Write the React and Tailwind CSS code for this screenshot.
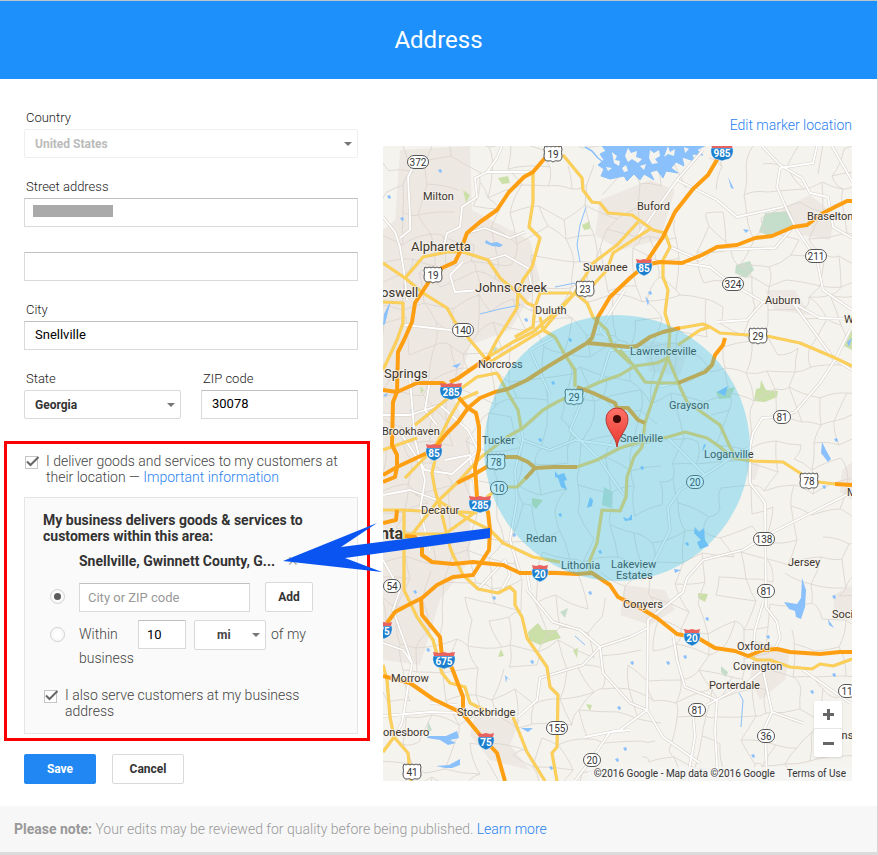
import React, { useState } from "react"

const motorways = [
	"M560 146L545 158L533 172L524 177L509 192L497 210L480 222L467 233L460 252L455 262L442 268L430 280L415 303L412 322L404 340L398 352L397 392L393 402L392 445L397 455L397 467L395 477L383 482",
	"M383 390L397 392L417 383L443 383L452 390L468 408L476 413L479 427L479 450L475 467L477 497L480 503L488 512L490 530L489 550L473 575L453 577L437 585L422 598L408 605L395 612L387 623",
	"M450 382L457 379L480 363L490 357",
	"M383 475L397 467L427 453L433 450L447 433L458 422L468 408L480 398L495 392L508 389L527 380L547 367L587 343L592 338L598 317L610 297L630 278L643 267L663 237L675 212L693 189L708 175L718 158L722 146",
	"M645 265L660 262L682 263L702 255L717 247L737 245L755 238L772 236L793 227L807 225L823 213L847 201L852 201",
	"M588 343L630 347L637 346L650 337L663 332L680 328",
	"M725 338L723 345L715 355L712 365L705 372L678 383",
	"M457 483L473 475L490 465L503 457L517 457L528 462L535 468L553 467L577 467M535 468L525 479",
	"M577 387L593 393L615 403L617 408L628 408L638 420L645 423",
	"M835 484L852 485",
	"M383 523L396 520L397 510M405 536L415 537L422 547L422 555L432 562L453 564L473 562L503 565L520 573L557 573L577 574L592 573L610 585L618 597L642 609L657 618L677 634L698 638L715 648L735 651L748 656L763 650L777 649L790 652L820 654L840 652L852 652",
	"M421 598L422 615L440 637L442 657L452 668L463 697L463 713",
	"M383 676L410 683L433 699L462 713L480 735L497 753L505 781",
]

const highways = [
	"M680 328L703 324L710 327L720 333L748 335L767 336L800 343L833 357L852 366",
	"M678 345L700 330L710 327",
	"M678 383L660 383L645 382L633 365L620 350",
	"M668 358L657 387L645 423L642 447L634 457L627 477L626 497L620 511L602 510L597 543L590 560L590 574",
	"M668 358L680 387L687 402L720 425L730 447L735 455",
	"M668 358L657 363L635 366L620 375L600 382L587 388L557 402L543 410L523 428L507 437L480 458L457 483L437 502L404 545",
	"M577 467L597 460L620 448L640 442L668 437L685 432L707 438L720 447L733 458L753 461L783 462L800 473L810 481L835 484",
	"M525 479L517 487L500 487L487 497",
	"M555 337L565 355L575 370L575 387",
	"M488 357L513 342L533 332L560 308L575 293L593 263L617 245L638 222",
	"M490 362L543 330L553 318L575 293L593 285L607 270L613 253L630 242L650 229",
	"M563 155L582 178L583 190L592 202L600 203L608 213L632 215L653 230L665 233L670 247L663 260L663 277L668 290L665 313L670 330L668 358",
	"M533 173L533 202L529 227L540 238L532 267L523 280L518 293L517 308L497 340L488 357",
	"M383 263L405 278L423 293L447 308L455 322L470 340L485 358",
	"M405 278L412 270L423 257L447 252L463 252L488 260L500 278L518 293L527 303L538 308",
	"M383 302L403 303L403 323L397 340L383 370",
	"M572 293L540 293L535 307L533 327L515 337",
	"M575 293L587 303L593 317L607 330L613 347L630 363",
	"M540 317L543 330L555 337",
	"M383 510L403 510L437 512L463 512L477 513M435 460L432 473L435 490L440 507L450 547L453 555L463 575L478 589L498 593L510 587L515 592L515 605L522 617L527 638L547 667L550 687L558 695L557 747L552 753L557 781",
	"M437 500L470 520L490 530L503 543L533 557L560 562",
	"M404 510L404 590L417 617L433 640L442 673L450 683L465 687L470 703L490 713",
	"M404 534L445 534L470 516L478 510",
	"M383 665L387 680L390 717L394 737L408 753L411 781M394 737L383 752",
	"M513 717L527 752L545 781",
	"M497 373L508 393L518 410L521 428",
	"M497 373L477 377L452 395L415 425",
	"M478 392L460 400L450 417L435 447L405 478",
	"M383 450L417 438",
	"M748 656L757 660L770 660L790 667L812 669L820 664L833 666L852 659",
]

const streets = [
	"M413 167L408 177L410 217L410 230L400 238M383 217L395 232L400 247L405 278L407 300",
	"M502 146L497 158L487 172L475 178L477 197L462 207L460 227L447 233L443 250M487 172L533 172",
	"M467 233L485 228L510 238L525 232M463 262L450 275L455 292L480 290M488 260L505 255L528 268L532 290",
	"M703 150L677 180L637 237",
	"M762 146L780 165L802 178L810 193L828 197L833 227L852 238",
	"M817 146L813 163L780 168L777 187L787 210L797 230L817 260L823 290L833 297L852 310",
	"M832 146L852 181M677 180L717 200L737 217L783 207",
	"M682 263L710 267L730 283L763 302L793 303L820 318L852 319",
	"M763 302L747 320L717 322M793 303L820 340L833 358L852 370",
	"M670 247L700 260L712 250L775 248L793 227",
	"M850 330L835 360L820 383L795 412L777 417L762 418L753 433L750 447L750 483L765 503L766 607L777 622L780 638L775 649",
	"M852 492L813 512L773 532L743 550L703 560L687 578L683 592L667 605L648 620L647 710L620 730L585 737",
	"M673 635L677 660L685 687L717 700L715 730L718 781M647 710L663 737L700 763",
	"M687 781L695 737L693 715M707 705L747 683L763 670L772 712L765 727L767 781M772 712L803 723M803 670L850 703",
	"M763 603L755 630L753 653M527 590L553 622L580 630L600 647L630 637L648 628",
	"M600 647L603 673L630 703L647 710M600 647L583 665L540 678L537 700L518 717",
	"M630 730L610 732L593 757L575 781M383 560L400 590L393 610L412 663L402 723L394 737",
	"M478 589L505 560L510 575L500 593M527 573L530 590M405 325L450 330L470 340",
	"M383 415L410 415L440 405L468 430L478 450M410 380L415 440L425 480L420 510L430 550",
	"M383 495L410 490L437 500M430 380L425 410L437 425M445 460L470 455L475 490M383 428L400 432L425 470L452 474L479 450",
	"M521 428L523 440L515 470L517 500L510 540L520 573M523 440L550 450L575 440L617 446",
	"M550 395L530 350L555 337M600 382L610 350L655 350M587 388L570 430L600 460L620 490L626 497",
	"M750 447L735 455L705 475L680 490L668 508L670 530L655 560L640 580M667 437L690 460L705 475",
	"M657 387L690 380L712 365M620 350L600 330L615 305L625 290",
	"M383 643L403 650L412 663M430 703L457 705M383 716L430 712L462 713",
]

const parks = [
	"M765 213L790 211L795 226L770 236L759 232Z",
	"M498 178L508 176L510 183L502 184Z",
	"M582 225L590 221L590 229L584 230Z",
	"M736 265L750 261L754 270L746 278L735 273Z",
	"M761 380L766 390L778 391L777 397L765 402L754 401L756 389L760 388Z",
	"M716 392L735 387L730 398L719 399Z",
	"M604 487L613 492L611 508L602 505Z",
	"M532 498L543 500L536 509L532 505Z",
	"M528 632L538 623L543 630L556 630L561 638L550 641L540 645L529 640Z",
	"M560 612L568 608L565 618Z",
	"M501 649L504 656L498 657Z",
	"M573 650L578 648L577 658Z",
	"M428 721L432 730L427 733Z",
	"M586 704L592 705L590 711Z",
	"M698 593L708 594L705 602L698 598Z",
	"M721 666L728 672L726 677L721 672Z",
	"M844 346L852 330L852 350Z",
	"M463 190L470 195L466 203Z",
	"M492 345L498 348L494 354Z",
	"M420 386L424 390L421 394Z",
]

const lakes = [
	"M486 240L491 243L497 242L503 245L500 247L492 246L485 243Z",
	"M728 177L734 189L731 188Z",
	"M452 366L461 363L457 368Z",
	"M555 471L558 475L564 473L567 480L564 481L567 490L561 487L558 478L555 477Z",
	"M590 497L593 500L592 506L587 508L588 504Z",
	"M695 527L699 532L704 528L705 540L709 546L700 549L697 542L701 540L694 533Z",
	"M717 392L728 386L725 396Z",
	"M822 442L827 452L831 459L828 462L821 453Z",
	"M802 578L806 590L805 607L801 619L796 617L795 611L789 609L784 602L797 604L801 598Z",
	"M623 517L628 519L632 514L632 520L625 521Z",
	"M428 736L446 736L457 731L459 738L450 740L456 743L448 745L440 740L427 738Z",
	"M436 766L449 765L460 759L460 765L452 768L445 768Z",
	"M521 728L533 728L528 732Z",
	"M828 619L834 628L829 625Z",
	"M384 314L391 300L385 324L383 325Z",
	"M674 569L681 570L675 573Z",
	"M706 445L702 452L704 444Z",
	"M505 675L510 680L507 678L506 683Z",
	"M743 229L749 230L746 233Z",
	"M847 342L852 338L849 347Z",
	"M383 395L388 393L386 397Z",
	"M645 296L649 301L648 306Z",
]

const ponds = [
	[440, 171], [402, 219], [389, 197], [526, 320], [553, 383], [412, 411], [650, 293], [415, 592], [428, 650],
	[532, 662], [494, 598], [590, 593], [619, 708], [551, 768], [617, 760], [632, 663], [668, 663], [685, 657],
	[625, 749], [753, 756], [812, 692], [834, 675], [707, 619], [836, 440], [681, 390], [824, 487], [642, 468],
	[834, 597], [768, 637], [687, 544], [514, 535], [560, 515], [600, 552], [570, 340], [540, 440],
]

const builtUp = [
	"M400 150L470 146L472 210L530 240L540 280L510 330L470 345L455 400L470 440L470 560L440 600L420 665L383 660L383 230L395 220Z",
	"M600 200L650 180L675 190L660 240L620 250L595 235Z",
	"M475 715L520 720L510 745L530 770L490 760L470 735Z",
	"M625 585L665 590L675 610L650 625L620 615Z",
	"M755 640L790 650L785 680L760 700L750 680Z",
	"M780 210L810 195L835 215L830 240L800 235Z",
	"M745 455L760 465L755 480L748 478Z",
	"M765 290L795 290L810 315L775 310Z",
	"M842 470L852 462L852 500L840 492Z",
	"M640 340L690 345L680 375L650 372Z",
	"M833 595L852 585L852 620L835 618Z",
]

// tangle of unnamed back roads under the named ones
function buildBackRoads() {
	let seed = 11
	const random = () => {
		seed = (seed * 16807) % 2147483647
		return seed / 2147483647
	}
	const size = 23
	const rows = []
	for (let r = 0; r < 31; r++) {
		const row = []
		for (let c = 0; c < 23; c++) {
			row.push([
				Math.round(370 + c * size + random() * 20),
				Math.round(133 + r * size + random() * 20),
			])
		}
		rows.push(row)
	}
	let d = ""
	const link = (a, b) => {
		const mx = Math.round((a[0] + b[0]) / 2 + random() * 8 - 4)
		const my = Math.round((a[1] + b[1]) / 2 + random() * 8 - 4)
		d += `M${a[0]} ${a[1]}Q${mx} ${my} ${b[0]} ${b[1]}`
	}
	for (let r = 0; r < 30; r++) {
		for (let c = 0; c < 22; c++) {
			if (random() < 0.72) link(rows[r][c], rows[r][c + 1])
			if (random() < 0.72) link(rows[r][c], rows[r + 1][c])
		}
	}
	return d
}

const backRoads = buildBackRoads()

const towns = [
	["Milton", 423, 200, 11],
	["Alpharetta", 411, 251, 13],
	["Roswell", 373, 297, 13],
	["Johns Creek", 475, 292, 13],
	["Suwanee", 583, 271, 11],
	["Duluth", 535, 314, 11],
	["Buford", 637, 210, 11],
	["Braselton", 807, 220, 11],
	["Auburn", 765, 304, 11],
	["Winder", 844, 323, 11],
	["Norcross", 478, 368, 11],
	["Springs", 384, 378, 13],
	["Lawrenceville", 630, 355, 11],
	["Grayson", 669, 409, 11],
	["Snellville", 620, 442, 11],
	["Loganville", 704, 458, 11],
	["Monroe", 847, 496, 11],
	["Brookhaven", 382, 435, 11],
	["Tucker", 482, 444, 11],
	["Decatur", 421, 514, 11],
	["Redan", 526, 542, 11],
	["Lithonia", 561, 569, 11],
	["Lakeview", 611, 568, 11],
	["Estates", 616, 579, 11],
	["Conyers", 623, 608, 11],
	["Jersey", 788, 566, 11],
	["Social Circle", 832, 618, 11],
	["Oxford", 737, 650, 11],
	["Covington", 733, 670, 11],
	["Porterdale", 709, 689, 11],
	["Morrow", 391, 682, 11],
	["Stockbridge", 457, 716, 11],
	["Jonesboro", 377, 736, 11],
	["Mansfield", 826, 739, 11],
]

const usRoutes = [
	["19", 553, 154], ["19", 433, 275], ["23", 585, 289], ["29", 758, 336],
	["29", 574, 397], ["78", 496, 462], ["78", 809, 481], ["41", 412, 772],
]

const stateRoutes = [
	["372", 418, 162], ["140", 463, 330], ["211", 816, 256], ["324", 733, 284], ["10", 499, 488],
	["81", 782, 417], ["20", 695, 482], ["138", 764, 539], ["54", 392, 586], ["155", 557, 728],
	["20", 592, 760], ["81", 766, 591], ["81", 697, 710], ["36", 766, 736], ["11", 847, 691],
]

const interstates = [
	["985", 722, 152], ["85", 644, 267], ["285", 451, 391], ["85", 434, 452], ["285", 480, 504],
	["20", 540, 573], ["75", 486, 741], ["675", 444, 660], ["75", 384, 630], ["20", 692, 637],
]

function UsShield({ label, x, y }) {
	return (
		<g transform={`translate(${x} ${y})`}>
			<path
				d="M-8 -8Q-6 -6 -4 -8Q-2 -6 0 -8Q2 -6 4 -8Q6 -6 8 -8L9 -5Q8 -2 9 2Q9 7 5 7Q2 6 0 8Q-2 6 -5 7Q-9 7 -9 2Q-8 -2 -9 -5Z"
				fill="#fff"
				stroke="#555"
			/>
			<text y="4" textAnchor="middle" fontSize="10" fill="#333">
				{label}
			</text>
		</g>
	)
}

function StateShield({ label, x, y }) {
	const w = label.length > 2 ? 21 : 17
	return (
		<g transform={`translate(${x} ${y})`}>
			<rect x={-w / 2} y="-6.5" width={w} height="13" rx="6.5" fill="#fff" stroke="#555" />
			<text y="4" textAnchor="middle" fontSize="10" fill="#333">
				{label}
			</text>
		</g>
	)
}

function InterstateShield({ label, x, y }) {
	const w = label.length > 2 ? 11 : 8
	return (
		<g transform={`translate(${x} ${y})`}>
			<path
				d={`M${-w} -4H${w}Q${w + 1} 4 ${w - 4} 7Q2 8 0 9Q-2 8 ${4 - w} 7Q${-w - 1} 4 ${-w} -4Z`}
				fill="#1b7fce"
				stroke="#fff"
				strokeWidth="0.5"
			/>
			<path d={`M${1 - w} -4L${-w} -8L-4 -7L0 -8L4 -7L${w} -8L${w - 1} -4Z`} fill="#e8625f" />
			<text y="5" textAnchor="middle" fontSize="10" fontWeight="700" fill="#fff">
				{label}
			</text>
		</g>
	)
}

function RoadMap() {
	return (
		<svg
			viewBox="383 146 469 635"
			className="block h-full w-full font-[Roboto,sans-serif] font-normal"
			fill="none"
			strokeLinejoin="round"
			role="img"
			aria-label="Map of the service area around Snellville"
		>
			<defs>
				<linearGradient id="pin" x1="0" y1="0" x2="0" y2="1">
					<stop offset="0" stopColor="#ff7168" />
					<stop offset="1" stopColor="#e8392f" />
				</linearGradient>
			</defs>
			<rect x="383" y="146" width="469" height="635" fill="#f5f3ee" />
			<g fill="#eee8e3">
				{builtUp.map((d) => (
					<path key={d} d={d} />
				))}
			</g>
			<g>
				{parks.map((d, i) => (
					<path key={d} d={d} fill={i % 3 ? "#cbdfa9" : "#c5ddcb"} />
				))}
			</g>
			<path d={backRoads} stroke="#dcd6cf" strokeWidth="0.9" />
			<g stroke="#8ac0fb">
				<path d="M586 207L580 225L577 245L580 262M480 314L500 309L520 305M555 287L575 283M739 693L743 700L741 727M575 636L585 645" />
				<path
					d="M602 146H704L697 150L703 155L692 154L694 161L682 157L684 166L676 162L671 168L678 173L666 171L663 178L657 170L650 172L654 180L644 174L640 180L634 174L627 181L624 176L610 179L601 176L604 169L598 165L604 160L600 154L606 151Z"
					fill="#8ac0fb"
				/>
				<path d="M585 147L592 151L598 158L603 162" strokeWidth="1.5" />
				<g fill="#8ac0fb" stroke="none">
					{lakes.map((d) => (
						<path key={d} d={d} />
					))}
					{ponds.map(([x, y]) => (
						<path key={`${x}-${y}`} d={`M${x - 2} ${y - 1}l3 -1l1 3l-2 1z`} />
					))}
				</g>
			</g>
			<path
				d="M612 152l5 4l-2 4l5 1l-1 5l-5 -3zM628 148l3 5l6 -2l-1 6l6 2l-4 4l-6 -4l-4 3l-3 -6zM650 150l4 3l5 -3l1 6l-5 3l3 4l-6 1l-3 -6zM668 146l2 6l5 -3l-1 7l-6 -2l-4 3zM606 167l6 1l-4 3zM622 168l4 -3l2 6l-4 1zM640 166l6 -2l-2 6zM684 147l5 2l-4 4z"
				fill="#f5f3ee"
			/>
			{streets.map((d) => (
				<path key={d} d={d} stroke="#d8d2cb" strokeWidth="3" />
			))}
			{streets.map((d) => (
				<path key={d} d={d} stroke="#ffffff" strokeWidth="1.8" />
			))}
			{highways.map((d) => (
				<path key={d} d={d} stroke="#f3ca68" strokeWidth="3.2" />
			))}
			{highways.map((d) => (
				<path key={d} d={d} stroke="#fdd157" strokeWidth="2.2" />
			))}
			{motorways.map((d) => (
				<path key={d} d={d} stroke="#fe9f13" strokeWidth="4" />
			))}
			{usRoutes.map(([label, x, y]) => (
				<UsShield key={`${x}-${y}`} label={label} x={x} y={y} />
			))}
			{stateRoutes.map(([label, x, y]) => (
				<StateShield key={`${x}-${y}`} label={label} x={x} y={y} />
			))}
			{interstates.map(([label, x, y]) => (
				<InterstateShield key={`${x}-${y}`} label={label} x={x} y={y} />
			))}
			<g fill="#3c352c" stroke="#f7f4f0" strokeWidth="2" strokeOpacity="0.8" paintOrder="stroke">
				{towns.map(([name, x, y, size]) => (
					<text key={name} x={x} y={y} fontSize={size}>
						{name}
					</text>
				))}
				<text x="403" y="539" fontSize="16" fontWeight="700" textAnchor="end">
					Atlanta
				</text>
			</g>
			<circle cx="617" cy="448" r="133" fill="#36c2ec" fillOpacity="0.35" />
			<path
				d="M617 447C616 436 606 430 606 419A11 11 0 0 1 628 419C628 430 618 436 617 447Z"
				fill="url(#pin)"
				stroke="#b93a32"
			/>
			<circle cx="617" cy="419" r="4" fill="#3d0805" />
		</svg>
	)
}

function Caret() {
	return (
		<svg viewBox="0 0 8 4" className="pointer-events-none absolute top-[13px] right-1.5 h-1 w-2" fill="#757575">
			<path d="M0 0H8L4 4Z" />
		</svg>
	)
}

function Dropdown({ id, className, options, ...rest }) {
	return (
		<div className="relative">
			<select
				id={id}
				className={`block w-full appearance-none rounded-xs border bg-white text-xs font-bold ${className}`}
				{...rest}
			>
				{options.map((option) => (
					<option key={option}>{option}</option>
				))}
			</select>
			<Caret />
		</div>
	)
}

function TextField({ className = "px-2.5 pb-0.5 text-[13px]", ...rest }) {
	return (
		<input
			type="text"
			className={`block h-[29px] w-full border border-[#d9d9d9] border-t-[#c0c0c0] bg-white font-normal text-black ${className}`}
			{...rest}
		/>
	)
}

function Label({ htmlFor, children }) {
	return (
		<label htmlFor={htmlFor} className="mb-[3px] block px-0.5 text-[13px] leading-4 text-[#222]">
			{children}
		</label>
	)
}

function Checkbox({ id }) {
	const [checked, setChecked] = useState(true)

	return (
		<span className="relative mt-[3px] ml-px block h-[13px] w-[13px] shrink-0">
			<input
				id={id}
				type="checkbox"
				checked={checked}
				onChange={() => setChecked(!checked)}
				className="block h-full w-full appearance-none border border-[#c6c6c6] bg-white"
			/>
			{checked && (
				<svg viewBox="0 0 15 13" className="pointer-events-none absolute top-0 left-0 h-[13px] w-[15px]" fill="none">
					<path d="M2 5.5L5.5 9L13.5 1" stroke="#666" strokeWidth="2" />
				</svg>
			)}
		</span>
	)
}

function AreaRadio({ value, area, setArea, label }) {
	return (
		<input
			type="radio"
			name="area"
			aria-label={label}
			checked={area === value}
			onChange={() => setArea(value)}
			className="mx-auto mt-[7px] block h-[15px] w-[15px] appearance-none rounded-full border border-[#d0d0d0] bg-white bg-clip-content p-[3px] checked:bg-[#5c5c5c]"
		/>
	)
}

function DeliveryArea() {
	const [area, setArea] = useState("places")

	return (
		<div className="mt-3 border border-[#e5e5e5] bg-[#fbfafa] px-[18px] pt-3.5 pb-3.5">
			<h2 className="text-sm leading-4 font-bold text-[#333]">
				My business delivers goods &amp; services to customers within this area:
			</h2>

			<div className="mt-[9px] flex items-center pl-9 leading-4">
				<span className="w-[204px] truncate text-sm leading-4 font-bold text-[#333]">
					Snellville, Gwinnett County, G...
				</span>
				<button aria-label="Remove area" className="ml-1 text-sm leading-4 text-[#aaa]">
					✕
				</button>
			</div>

			<div className="mt-[13px] grid grid-cols-[28px_minmax(0,1fr)] gap-x-2">
				<AreaRadio value="places" area={area} setArea={setArea} label="City or ZIP code" />
				<div className="flex gap-[15px]">
					<TextField
						aria-label="City or ZIP code"
						placeholder="City or ZIP code"
						className="mt-px max-w-[171px] px-2 text-[13px] placeholder:text-[#999]"
					/>
					<button className="h-[30px] w-12 shrink-0 rounded-xs border border-[#d9d9d9] bg-white text-xs font-bold text-[#333]">
						Add
					</button>
				</div>
			</div>

			<div className="mt-2 grid grid-cols-[28px_minmax(0,1fr)] gap-x-2">
				<AreaRadio value="radius" area={area} setArea={setArea} label="Within a distance" />
				<div className="text-sm leading-4 text-[#444]">
					<div className="flex items-start">
						<label htmlFor="distance" className="w-[59px] pt-1.5">
							Within
						</label>
						<div className="mr-2 w-12">
							<TextField id="distance" defaultValue="10" className="px-2 text-[13px]" />
						</div>
						<div className="mr-[5px] w-[72px]">
							<Dropdown
								aria-label="Unit"
								options={["mi", "km"]}
								className="h-[30px] border-[#d9d9d9] pl-[22px] text-[#444]"
							/>
						</div>
						<span className="pt-1.5">of my</span>
					</div>
					business
				</div>
			</div>

			<div className="mt-[21px] flex gap-2">
				<Checkbox id="serve" />
				<label htmlFor="serve" className="text-sm leading-4 text-[#444]">
					I also serve customers at my business address
				</label>
			</div>
		</div>
	)
}

function AddressForm() {
	return (
		<form className="pt-[31px]" onSubmit={(e) => e.preventDefault()}>
			<Label htmlFor="country">Country</Label>
			<Dropdown
				id="country"
				disabled
				options={["United States"]}
				className="h-[29px] border-[#efefef] px-2.5 text-[#bbb] opacity-100"
			/>

			<div className="mt-[21px]">
				<Label htmlFor="street">Street address</Label>
				<div className="relative">
					<TextField id="street" />
					<span className="pointer-events-none absolute top-[7px] left-[9px] h-3 w-20 bg-[#aaa]" />
				</div>
				<div className="mt-[25px]">
					<TextField aria-label="Street address, second line" />
				</div>
			</div>

			<div className="mt-[21px]">
				<Label htmlFor="city">City</Label>
				<TextField id="city" defaultValue="Snellville" />
			</div>

			<div className="mt-[21px] grid grid-cols-2 gap-5">
				<div>
					<Label htmlFor="state">State</Label>
					<Dropdown
						id="state"
						options={["Georgia"]}
						className="h-[29px] border-[#d9d9d9] px-2.5 text-[#333]"
					/>
				</div>
				<div>
					<Label htmlFor="zip">ZIP code</Label>
					<TextField id="zip" defaultValue="30078" />
				</div>
			</div>

			<section className="relative mt-[34px]">
				<div className="flex gap-2">
					<Checkbox id="deliver" />
					<div className="text-sm leading-4 text-[#444]">
						<label htmlFor="deliver">I deliver goods and services to my customers at their location — </label>
						<a href="#info" className="text-[#2a84f0]">
							Important information
						</a>
					</div>
				</div>
				<DeliveryArea />

				<div className="pointer-events-none absolute -top-3 -right-3 -bottom-[7px] -left-5 border-3 border-[#fb0000]" />
				<svg
					viewBox="283 523 207 50"
					className="pointer-events-none absolute top-[70px] left-[259px] z-10 h-[50px] w-[207px]"
					fill="#0a55f2"
				>
					<path d="M283 561L377 523L341 547L490 528V538L345 558L382 572Z" />
				</svg>
			</section>

			<div className="mt-5 flex gap-4 text-xs font-bold">
				<button className="h-[30px] w-[72px] rounded-xs bg-[#2187f3] text-white">Save</button>
				<button className="h-[30px] w-[72px] rounded-xs border border-[#d9d9d9] bg-white text-[#333]">
					Cancel
				</button>
			</div>
		</form>
	)
}

function ServiceMap() {
	return (
		<div className="pt-[38px]">
			<div className="text-right text-sm leading-4">
				<a href="#marker" className="text-[#2a7ff0]">
					Edit marker location
				</a>
			</div>

			<div className="relative mt-[13px] aspect-[469/635] overflow-hidden">
				<RoadMap />
				<div className="absolute right-2.5 bottom-6 w-7 divide-y divide-[#e6e6e6] rounded-xs bg-white shadow-sm">
					<button aria-label="Zoom in" className="flex h-7 w-full items-center justify-center">
						<svg viewBox="0 0 11 11" className="h-[11px] w-[11px]" stroke="#666" strokeWidth="3">
							<path d="M0 5.5H11M5.5 0V11" />
						</svg>
					</button>
					<button aria-label="Zoom out" className="flex h-7 w-full items-center justify-center">
						<svg viewBox="0 0 11 11" className="h-[11px] w-[11px]" stroke="#666" strokeWidth="3">
							<path d="M0 5.5H11" />
						</svg>
					</button>
				</div>
				<div className="absolute right-0 bottom-0 flex gap-3 bg-[#f5f5f5]/70 px-1.5 text-[10px] leading-[14px] font-normal text-[#333]">
					<span>©2016 Google - Map data ©2016 Google</span>
					<a href="#terms">Terms of Use</a>
				</div>
			</div>
		</div>
	)
}

function App() {
	return (
		<div className="border-b-4 border-[#dcdcdc] bg-white font-[Roboto,sans-serif] font-light">
			<div className="border-r border-[#d5d5d5]">
				<header className="flex h-[79px] items-center justify-center border-t border-[#b9c4cf] bg-[#1e90fb]">
					<h1 className="text-2xl leading-8 font-normal text-white">Address</h1>
				</header>

				<main className="grid grid-cols-[334px_minmax(0,1fr)] gap-x-[25px] pr-[25px] pb-[22px] pl-6">
					<AddressForm />
					<ServiceMap />
				</main>

				<footer className="bg-[#f7f7f7] px-3.5 py-[15px] text-sm leading-4 text-[#999]">
					<strong className="font-bold">Please note:</strong> Your edits may be reviewed for quality before being
					published.{" "}
					<a href="#learn" className="text-[#2a84f0]">
						Learn more
					</a>
				</footer>
			</div>
		</div>
	)
}

export default App
